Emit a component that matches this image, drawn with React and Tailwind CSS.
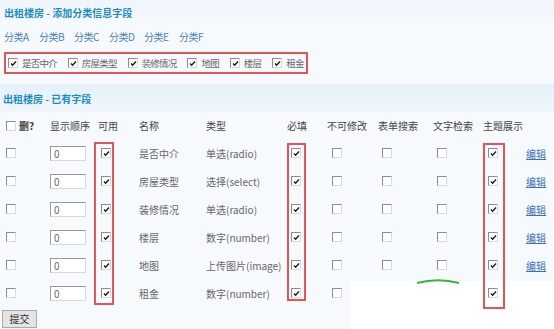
import React from 'react';

const font = { fontFamily: '"Noto Sans CJK SC", "Noto Sans", sans-serif' };

const categories = ['分类A', '分类B', '分类C', '分类D', '分类E', '分类F'];
const groupFields = ['是否中介', '房屋类型', '装修情况', '地图', '楼层', '租金'];

const rows = [
  { name: '是否中介', type: '单选(radio)' },
  { name: '房屋类型', type: '选择(select)' },
  { name: '装修情况', type: '单选(radio)' },
  { name: '楼层', type: '数字(number)' },
  { name: '地图', type: '上传图片(image)' },
  { name: '租金', type: '数字(number)' },
];

const Box = ({ checked }) => (
  <span className="inline-block w-[10px] h-[10px] bg-white border border-t-[#8d8d8d] border-l-[#8d8d8d] border-r-[#d9d9d9] border-b-[#d9d9d9] relative shrink-0">
    {checked && (
      <svg className="absolute left-[1px] top-[1px]" width="7" height="7" viewBox="0 0 7 7">
        <path d="M1 3.6 L2.6 5.2 L6 1.6" fill="none" stroke="#1a1a1a" strokeWidth="1.4" />
      </svg>
    )}
  </span>
);

const cols = 'grid grid-cols-[50px_48px_41px_67px_81px_40px_51px_55px_50px_43px_28px] items-center';

const App = () => {
  return (
    <div className="relative w-[554px] h-[329px] overflow-hidden bg-[#f7fafd] text-[10px] text-[#666]" style={font}>
      {/* white patch of the cropped screenshot, bottom right */}
      <div className="absolute left-[350px] top-[281px] right-0 bottom-0 bg-white" />
      <svg className="absolute left-[416px] top-[278px]" width="44" height="6" viewBox="0 0 44 6">
        <path d="M1 5 Q22 -0.5 43 5" fill="none" stroke="#3cb13c" strokeWidth="2" />
      </svg>

      <div className="relative flex flex-col">
        <div className="h-[24px] flex items-center pl-[4px] bg-gradient-to-b from-[#eef5fb] to-[#f6fafd]">
          <span className="font-bold text-[#1d8cc6]">出租楼房 - 添加分类信息字段</span>
        </div>

        <div className="h-[24px] flex items-center pl-[4px] gap-[10px] text-[#4a80b8]">
          {categories.map((c) => (
            <span key={c} className="w-[25px] whitespace-nowrap tracking-[-0.5px]">{c}</span>
          ))}
        </div>

        <div className="mt-[4px] ml-[4px] w-[304px] h-[22px] border-2 border-[#e05656] flex items-center pl-[2px] gap-[11px] whitespace-nowrap">
          {groupFields.map((f) => (
            <span key={f} className="flex items-center gap-[4px]">
              <Box checked />
              <span className="text-[9.5px] tracking-[-0.8px]">{f}</span>
            </span>
          ))}
        </div>

        <div className="mt-[10px] h-[28px] flex items-center pl-[3px] bg-gradient-to-b from-[#e6f1f9] to-[#eef6fb]">
          <span className="font-bold text-[#1d8cc6]">出租楼房 - 已有字段</span>
        </div>

        <div className={`h-[27px] ${cols} text-[#444]`}>
          <span className="flex items-center gap-[3px] pl-[6px]"><Box /><span className="font-bold">删?</span></span>
          <span>显示顺序</span>
          <span>可用</span>
          <span>名称</span>
          <span>类型</span>
          <span>必填</span>
          <span>不可修改</span>
          <span>表单搜索</span>
          <span>文字检索</span>
          <span>主题展示</span>
          <span />
        </div>

        {rows.map((r, i) => {
          const last = i === rows.length - 1;
          return (
            <div key={r.name} className={`h-[28px] ${cols}`}>
              <span className="pl-[6px] flex"><Box /></span>
              <span className="flex">
                <span className="w-[36px] h-[15px] bg-white border border-t-[#9a9a9a] border-l-[#9a9a9a] border-r-[#d8d8d8] border-b-[#d8d8d8] pl-[3px] leading-[13px] text-[#666]">0</span>
              </span>
              <span className="pl-[3px] flex"><Box checked /></span>
              <span>{r.name}</span>
              <span className="whitespace-nowrap">{r.type}</span>
              <span className="pl-[4px] flex"><Box checked /></span>
              <span className="pl-[5px] flex"><Box /></span>
              <span className="pl-[4px] flex">{!last && <Box />}</span>
              <span className="pl-[4px] flex">{!last && <Box />}</span>
              <span className="pl-[5px] flex"><Box checked /></span>
              <span className="text-[#3c6fb2] underline">{!last && '编辑'}</span>
            </div>
          );
        })}

        <div className="mt-[3px] ml-[2px]">
          <button className="w-[35px] h-[18px] bg-[#e4e4e4] border border-[#a9a9a9] text-[#333] text-[10px] leading-[16px]">提交</button>
        </div>
      </div>

      {/* red highlight frames */}
      <div className="absolute left-[94px] top-[142px] w-[20px] h-[163px] border-2 border-[#e05656]" />
      <div className="absolute left-[287px] top-[143px] w-[19px] h-[158px] border-2 border-[#e05656]" />
      <div className="absolute left-[483px] top-[143px] w-[22px] h-[166px] border-2 border-[#e05656]" />
    </div>
  );
};

export default App;
